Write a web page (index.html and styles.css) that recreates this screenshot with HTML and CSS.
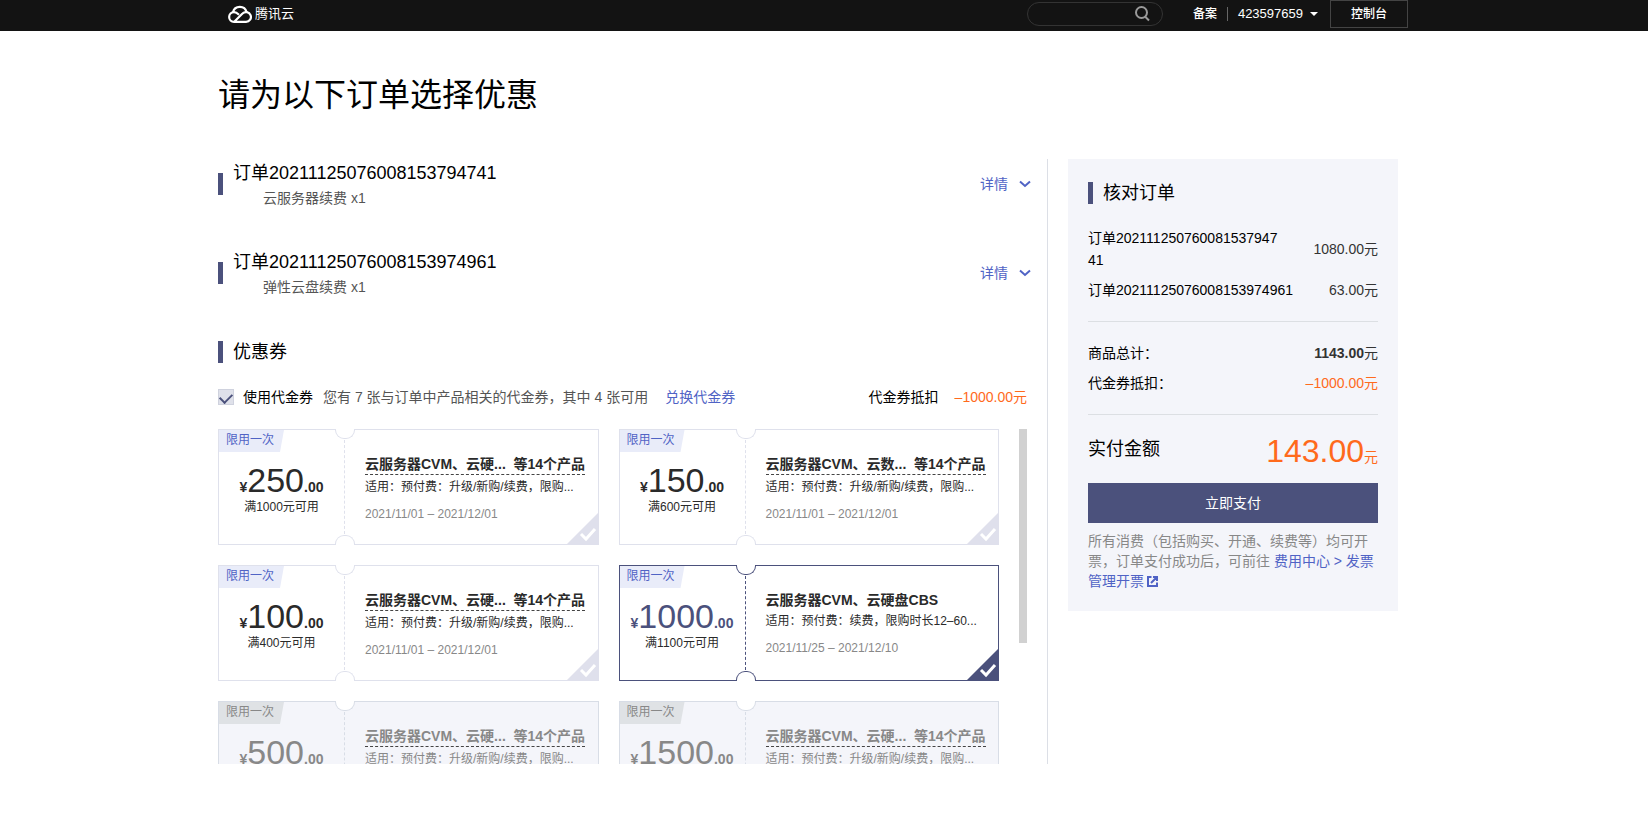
FILE: index.html
```html
<!DOCTYPE html>
<html lang="zh-CN">
<head>
<meta charset="utf-8">
<meta name="viewport" content="width=device-width, initial-scale=1">
<title>选择优惠 - 腾讯云</title>
<link rel="stylesheet" href="styles.css">
</head>
<body>
<svg class="defs" aria-hidden="true">
  <symbol id="tick" viewBox="0 0 33 33"><path d="M0 33 33 0v33z" fill="currentColor"/><path d="M15 22l5 5 9-10" fill="none" stroke="#fff" stroke-width="3"/></symbol>
  <symbol id="down" viewBox="0 0 12 8"><path d="M1 1.5l5 4.500 5-4.500" fill="none" stroke="currentColor" stroke-width="2"/></symbol>
</svg>
<header class="topbar">
  <div class="topbar-inner">
    <a class="logo" href="#">
      <svg width="24" height="18" viewBox="0 0 24 18" fill="none" stroke="#fff" stroke-width="2.2"><path d="M11 9.800C9.300 8.200 8 7.200 6 7.200a4.800 4.800 0 0 0 0 9.700h12a4.900 4.900 0 1 0-3.500-8.300L6.500 16.500"/><path d="M5 7.300a7 7 0 0 1 13.600-.1"/></svg>
      <span>腾讯云</span>
    </a>
    <form class="search">
      <input type="text" aria-label="搜索">
      <button type="button" aria-label="搜索"><svg width="16" height="16" viewBox="0 0 16 16" fill="none" stroke="#9a9a9a" stroke-width="2"><circle cx="7.500" cy="6.500" r="5.500"/><path d="M11 10.500l4 4"/></svg></button>
    </form>
    <nav class="topnav">
      <a href="#">备案</a>
      <a class="account" href="#">423597659<i class="caret"></i></a>
    </nav>
    <a class="console" href="#">控制台</a>
  </div>
</header>
<main class="page">
  <h1>请为以下订单选择优惠</h1>
  <div class="columns">
    <section class="content">
      <article class="order">
        <div class="order-text"><h2>订单20211125076008153794741</h2><p>云服务器续费 x1</p></div>
        <button class="detail" type="button">详情<svg width="12" height="8"><use href="#down"/></svg></button>
      </article>
      <article class="order">
        <div class="order-text"><h2>订单20211125076008153974961</h2><p>弹性云盘续费 x1</p></div>
        <button class="detail" type="button">详情<svg width="12" height="8"><use href="#down"/></svg></button>
      </article>
      <h2 class="bar-title">优惠券</h2>
      <div class="voucher-row">
        <input id="use" type="checkbox" checked>
        <label for="use">使用代金券</label>
        <span class="hint">您有 7 张与订单中产品相关的代金券，其中 4 张可用</span>
        <a href="#">兑换代金券</a>
        <span class="deduct">代金券抵扣</span>
        <span class="orange">–1000.00元</span>
      </div>
      <div class="voucher-list">
        <div class="grid">
          <article class="card">
            <span class="tag">限用一次</span>
            <div class="value"><p class="amount">¥<b>250</b>.00</p><p>满1000元可用</p></div>
            <div class="info"><h3 class="more"><span>云服务器CVM、云硬...</span><span>等14个产品</span></h3><p>适用：预付费：升级/新购/续费，限购...</p><time>2021/11/01 – 2021/12/01</time></div>
            <svg class="corner"><use href="#tick"/></svg>
          </article>
          <article class="card">
            <span class="tag">限用一次</span>
            <div class="value"><p class="amount">¥<b>150</b>.00</p><p>满600元可用</p></div>
            <div class="info"><h3 class="more"><span>云服务器CVM、云数...</span><span>等14个产品</span></h3><p>适用：预付费：升级/新购/续费，限购...</p><time>2021/11/01 – 2021/12/01</time></div>
            <svg class="corner"><use href="#tick"/></svg>
          </article>
          <article class="card">
            <span class="tag">限用一次</span>
            <div class="value"><p class="amount">¥<b>100</b>.00</p><p>满400元可用</p></div>
            <div class="info"><h3 class="more"><span>云服务器CVM、云硬...</span><span>等14个产品</span></h3><p>适用：预付费：升级/新购/续费，限购...</p><time>2021/11/01 – 2021/12/01</time></div>
            <svg class="corner"><use href="#tick"/></svg>
          </article>
          <article class="card selected">
            <span class="tag">限用一次</span>
            <div class="value"><p class="amount">¥<b>1000</b>.00</p><p>满1100元可用</p></div>
            <div class="info"><h3>云服务器CVM、云硬盘CBS</h3><p>适用：预付费：续费，限购时长12–60...</p><time>2021/11/25 – 2021/12/10</time></div>
            <svg class="corner"><use href="#tick"/></svg>
          </article>
          <article class="card disabled">
            <span class="tag">限用一次</span>
            <div class="value"><p class="amount">¥<b>500</b>.00</p></div>
            <div class="info"><h3 class="more"><span>云服务器CVM、云硬...</span><span>等14个产品</span></h3><p>适用：预付费：升级/新购/续费，限购...</p></div>
          </article>
          <article class="card disabled">
            <span class="tag">限用一次</span>
            <div class="value"><p class="amount">¥<b>1500</b>.00</p></div>
            <div class="info"><h3 class="more"><span>云服务器CVM、云硬...</span><span>等14个产品</span></h3><p>适用：预付费：升级/新购/续费，限购...</p></div>
          </article>
        </div>
        <div class="scroll-thumb"></div>
      </div>
    </section>
    <aside class="summary">
      <h2 class="bar-title">核对订单</h2>
      <dl class="lines">
        <div><dt>订单20211125076008153794741</dt><dd>1080.00元</dd></div>
        <div><dt>订单20211125076008153974961</dt><dd>63.00元</dd></div>
      </dl>
      <dl class="lines totals">
        <div><dt>商品总计：</dt><dd><strong>1143.00</strong>元</dd></div>
        <div><dt>代金券抵扣：</dt><dd class="orange">–1000.00元</dd></div>
      </dl>
      <div class="due"><span>实付金额</span><span class="orange"><b>143.00</b>元</span></div>
      <button class="pay" type="button">立即支付</button>
      <p class="note">所有消费（包括购买、开通、续费等）均可开票，订单支付成功后，可前往 <a href="#">费用中心 &gt; 发票管理开票<svg width="11" height="11" viewBox="0 0 11 11" fill="none" stroke="currentColor" stroke-width="2"><path d="M4.500 1H1v9h9V6.500M6 1h4v4M10 1L4 7"/></svg></a></p>
    </aside>
  </div>
</main>
</body>
</html>
```
FILE: styles.css
```css
* { box-sizing: border-box; }
body {
  margin: 0;
  background: #fff;
  color: #000;
  font: 14px/22px "Liberation Sans", "Noto Sans CJK SC", sans-serif;
}
h1, h2, h3, p, dl, dd { margin: 0; font-weight: 400; }
a { color: #5063c5; text-decoration: none; }
button { padding: 0; border: 0; background: none; font: inherit; cursor: pointer; }
.defs { display: none; }
.orange { color: #ff6a1c; }

.topbar { padding: 0 12px 0 0; background: #131313; color: #fff; font-size: 12px; font-weight: 500; }
.topbar-inner { display: flex; align-items: center; max-width: 1180px; height: 31px; margin: 0 auto; padding-bottom: 3px; }
.topbar a { color: #fff; }
.logo { display: flex; align-items: center; gap: 3px; margin-right: auto; font-size: 13px; font-weight: 400; }
.search { display: flex; align-items: center; width: 136px; height: 24px; margin-right: 30px; padding: 0 12px; border: 1px solid #333; border-radius: 12px; }
.search input { flex: 1; min-width: 0; padding: 0; border: 0; outline: 0; background: none; color: #fff; }
.search button { display: flex; }
.topnav { display: flex; align-items: center; line-height: 14px; }
.topnav a + a { margin-left: 10px; padding-left: 10px; border-left: 1px solid #666; }
.account { display: flex; align-items: center; gap: 7px; font-size: 13px; }
.caret { border: 4px solid transparent; border-top-color: #fff; border-bottom: 0; }
.console { margin-left: 12px; padding: 2px 20px; border: 1px solid #444; line-height: 22px; }

.page { padding: 0 32px 58px 0; }
.page h1 { max-width: 1180px; margin: 0 auto; padding-top: 40px; font-size: 32px; line-height: 48px; }
.columns { display: flex; align-items: flex-start; gap: 20px; max-width: 1180px; margin: 40px auto 0; }
.content { flex: 1; min-width: 0; padding-right: 20px; border-right: 1px solid #dcdfe6; }
.order { display: flex; align-items: center; height: 50px; margin-bottom: 39px; }
.order::before, .bar-title::before { content: ""; width: 5px; height: 22px; margin-right: 10px; background: #4b517c; }
.order-text { margin-right: auto; padding-top: 2px; }
.order h2, .bar-title { font-size: 18px; line-height: 26px; }
.order p { padding-left: 30px; line-height: 24px; color: #555; }
.detail { display: flex; align-items: center; gap: 11px; margin-right: -4px; color: #5063c5; }
.bar-title { display: flex; align-items: center; }
.content .bar-title { margin-top: 41px; }
.voucher-row { display: flex; align-items: center; height: 26px; margin: 19px 0; }
.voucher-row input { appearance: none; width: 16px; height: 16px; margin: 0 9px 0 0; border: 1px solid #cfd2de; background: #dfe1ea; }
.voucher-row input:checked::before { content: ""; display: block; width: 6px; height: 10px; margin: 1px auto 0; border: solid #4b517c; border-width: 0 2px 2px 0; transform: rotate(45deg); }
.hint { margin: 0 17px 0 10px; color: #555; }
.deduct { margin: 0 16px 0 auto; }

.voucher-list { display: flex; align-items: flex-start; gap: 20px; height: 335px; overflow: hidden; }
.grid { flex: 1; display: grid; grid-template-columns: 1fr 1fr; grid-auto-rows: 116px; gap: 20px; }
.scroll-thumb { width: 8px; height: 214px; background: #d1d1d1; }
.card { --line: #dfe1ec; position: relative; display: grid; grid-template-columns: 126px 1fr; border: 1px solid var(--line); color: #2a2a2a; font-size: 12px; line-height: 20px; }
.card::before, .card::after { content: ""; position: absolute; left: 116px; width: 18px; height: 9px; border: 1px solid var(--line); background: #fff; }
.card::before { top: -1px; border-top: 0; border-radius: 0 0 9px 9px; }
.card::after { bottom: -1px; border-bottom: 0; border-radius: 9px 9px 0 0; }
.tag { position: absolute; top: 0; left: 0; width: 65px; height: 22px; padding-left: 7px; background: #e9ecf9; color: #5063c5; clip-path: polygon(0 0, 100% 0, 61px 100%, 0 100%); }
.value { margin: 10px 0; padding-top: 23px; border-right: 1px dashed var(--line); text-align: center; }
.amount { height: 34px; font-size: 14px; line-height: 34px; font-weight: 700; white-space: nowrap; }
.amount b { font-size: 34px; font-weight: 400; }
.info { padding: 24px 12px 0 20px; white-space: nowrap; }
.info h3 { width: 220px; font-size: 14px; line-height: 20px; margin-bottom: 1px; font-weight: 700; }
.info .more { display: flex; justify-content: space-between; margin-bottom: 2px; border-bottom: 1px dashed #444; }
.info time { display: block; padding-top: 7px; color: #888; }
.corner { position: absolute; right: -1px; bottom: -1px; width: 33px; height: 33px; color: #dfe0ec; }
.selected { --line: #4b517c; }
.selected .amount, .selected .corner { color: #4b517c; }
.disabled { --line: #d8dde6; background: #f4f5fa; color: #888; }
.disabled .tag { background: #dfe2e5; color: #888; }

.summary { flex: 0 0 330px; padding: 21px 20px 20px; background: #f4f5fa; }
.summary .bar-title { margin-bottom: 21px; }
.lines { display: flex; flex-direction: column; gap: 8px; padding-bottom: 20px; border-bottom: 1px solid #dcdfe3; }
.lines > div { display: flex; align-items: center; justify-content: space-between; gap: 32px; }
.lines dt { word-break: break-all; }
.lines dd { flex: none; color: #333; }
.lines dd.orange { color: #ff6a1c; }
.totals { padding-top: 20px; }
.due { display: flex; justify-content: space-between; align-items: center; height: 68px; line-height: 40px; font-size: 18px; }
.due .orange { padding-top: 10px; font-size: 14px; }
.due b { font-size: 32px; font-weight: 400; }
.pay { display: block; width: 100%; height: 40px; margin-bottom: 8px; background: #4b517c; color: #fff; }
.note { color: #888; line-height: 20px; word-break: break-all; }
.note svg { margin-left: 3px; vertical-align: -1px; }
```
